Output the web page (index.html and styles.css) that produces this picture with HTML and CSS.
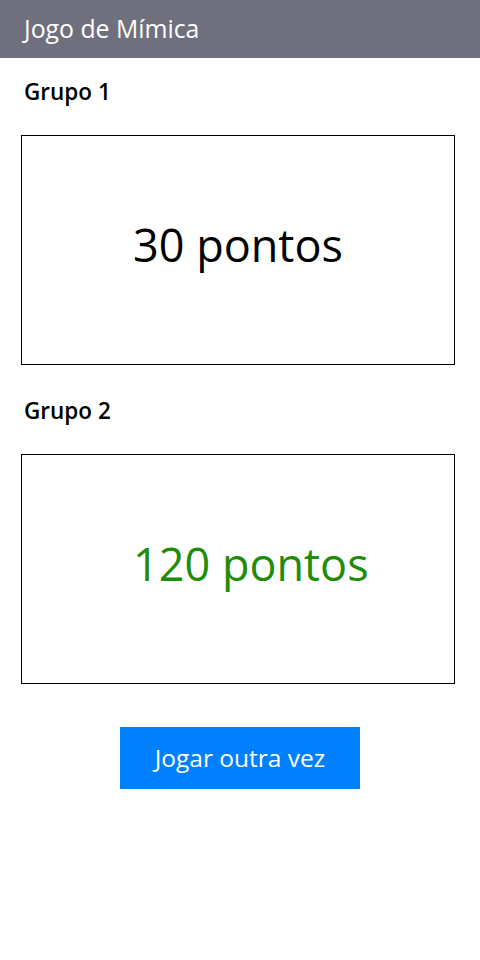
FILE: index.html
```html
<!DOCTYPE html>
<html lang="pt">
<head>
<meta charset="utf-8">
<title>Jogo de Mímica</title>
<link rel="stylesheet" href="styles.css">
</head>
<body>
<header class="app-bar">
  <h1 class="app-title">Jogo de Mímica</h1>
</header>
<main class="content">
  <section class="group">
    <h2 class="group-name">Grupo 1</h2>
    <div class="score-box"><span class="score">30 pontos</span></div>
  </section>
  <section class="group">
    <h2 class="group-name">Grupo 2</h2>
    <div class="score-box"><span class="score winner">120 pontos</span></div>
  </section>
  <div class="actions">
    <button class="play-again" type="button">Jogar outra vez</button>
  </div>
</main>
</body>
</html>
```

FILE: styles.css
```css
* { box-sizing: border-box; }
html, body {
  margin: 0;
  padding: 0;
  background: #ffffff;
  font-family: "Open Sans", "Noto Sans", sans-serif;
  color: #000;
}
.app-bar {
  height: 58px;
  background: #6f6f7d;
  display: flex;
  align-items: center;
  padding-left: 24px;
}
.app-title {
  margin: 0;
  font-size: 24.8px;
  font-weight: 400;
  color: #ffffff;
  line-height: 1;
  padding-bottom: 2px;
}
.content {
  padding: 0 0 0 21px;
}
.group {
  display: flex;
  flex-direction: column;
}
.group-name {
  margin: 0;
  padding-left: 3px;
  font-size: 22.5px;
  font-weight: 600;
  line-height: 30px;
  height: 77px;
  padding-top: 19px;
}
.score-box {
  width: 434px;
  height: 230px;
  border: 1px solid #000;
  display: flex;
  align-items: center;
  padding-left: 111px;
  padding-bottom: 12px;
  margin-bottom: 12px;
}
.score {
  font-size: 45px;
  line-height: 1;
  font-weight: 400;
  color: #000;
}
.score.winner {
  color: #218c0a;
}
.actions {
  display: flex;
  padding-left: 99px;
  padding-top: 31px;
}
.play-again {
  width: 240px;
  height: 62px;
  border: none;
  background: #0080ff;
  color: #ffffff;
  font-family: "Open Sans", "Noto Sans", sans-serif;
  font-size: 24.5px;
  font-weight: 400;
  padding: 0 0 2px;
  cursor: pointer;
}
```
